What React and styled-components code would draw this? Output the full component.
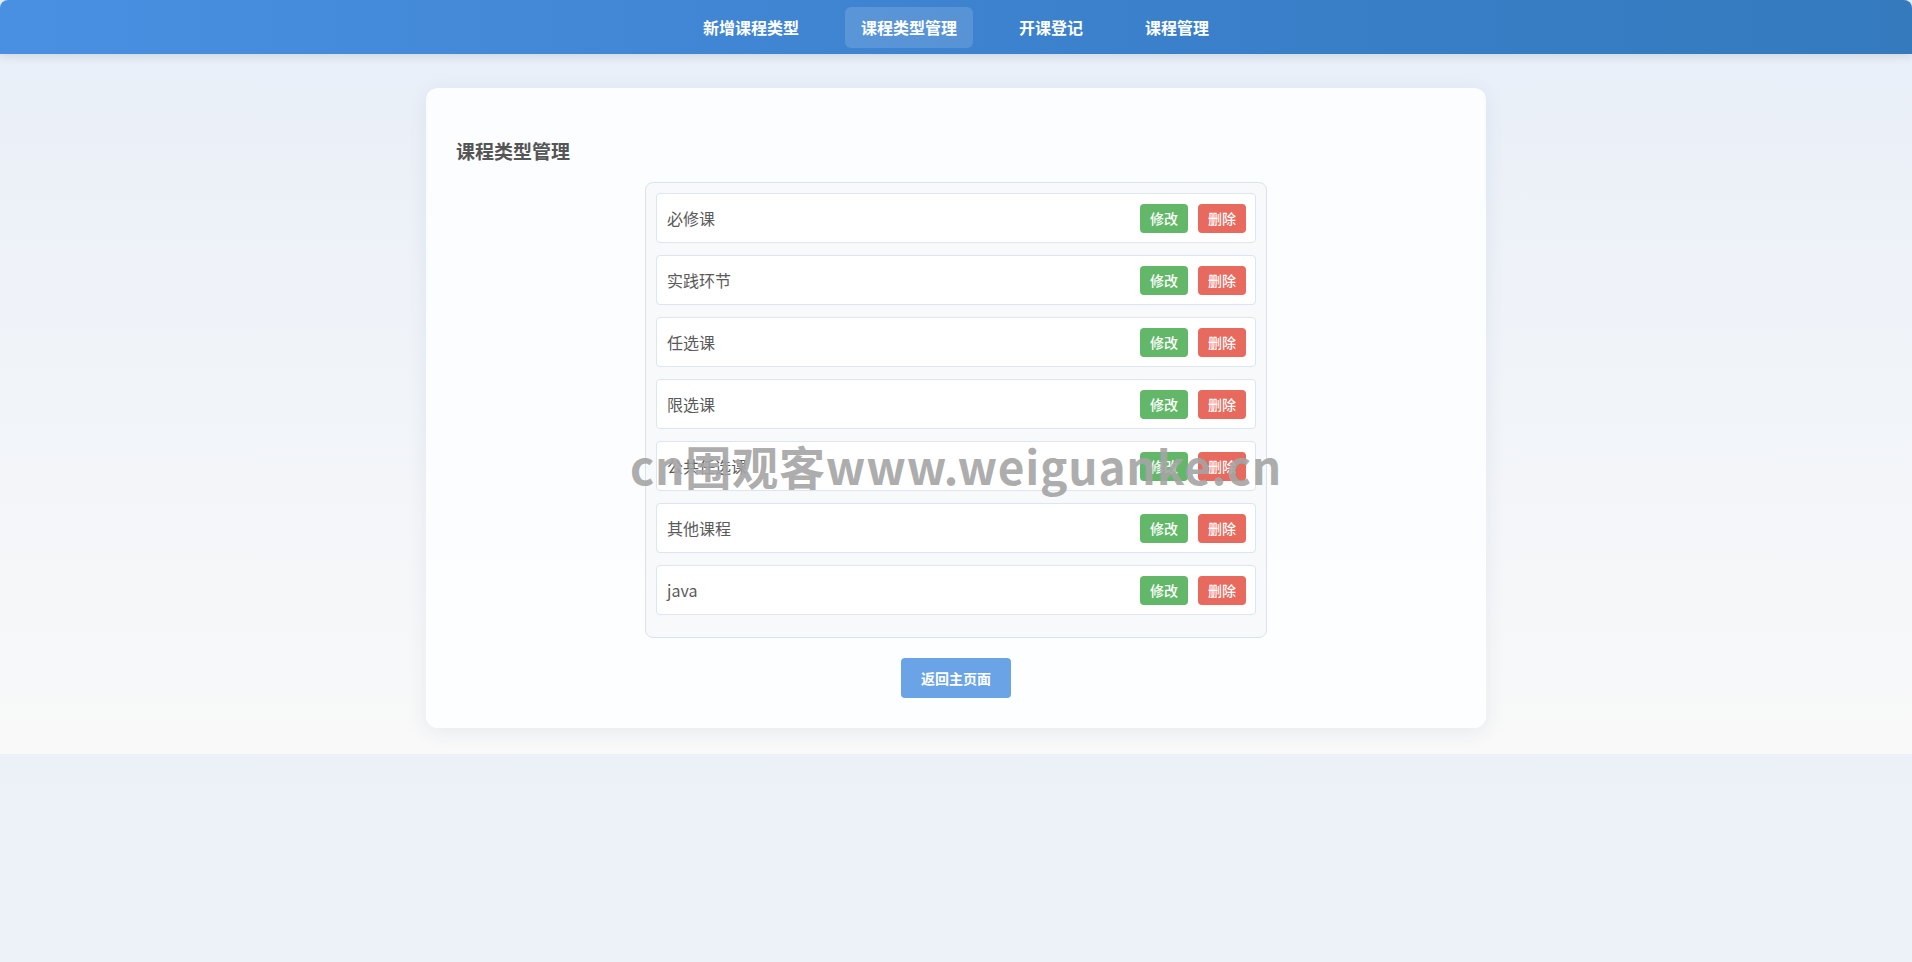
import styled, { createGlobalStyle } from "styled-components";

const GlobalStyle = createGlobalStyle`
  * {
    box-sizing: border-box;
  }
  html, body {
    margin: 0;
    padding: 0;
  }
  body {
    min-height: 100vh;
    background: linear-gradient(180deg, #e9eff8 0%, #edf1f8 100%);
    font-family: "Noto Sans CJK SC", "Noto Sans", "Liberation Sans", sans-serif;
    color: #555;
  }
`;

const navItems = ["新增课程类型", "课程类型管理", "开课登记", "课程管理"];

const courseTypes = [
  "必修课",
  "实践环节",
  "任选课",
  "限选课",
  "公共任选课",
  "其他课程",
  "java",
];

export default function App() {
  return (
    <Page>
      <GlobalStyle />
      <Header>
        <Nav>
          {navItems.map((item) => (
            <NavItem key={item} $active={item === "课程类型管理"}>
              {item}
            </NavItem>
          ))}
        </Nav>
      </Header>
      <Main>
        <Card>
          <Title>课程类型管理</Title>
          <TypeList>
            {courseTypes.map((name) => (
              <TypeRow key={name}>
                <TypeName>{name}</TypeName>
                <Actions>
                  <SmallButton $variant="edit">修改</SmallButton>
                  <SmallButton $variant="delete">删除</SmallButton>
                </Actions>
              </TypeRow>
            ))}
          </TypeList>
          <Footer>
            <BackButton>返回主页面</BackButton>
          </Footer>
        </Card>
      </Main>
      <Watermark>cn围观客www.weiguanke.cn</Watermark>
    </Page>
  );
}

const Page = styled.div`
  position: relative;
`;

const Header = styled.header`
  height: 54px;
  background: linear-gradient(90deg, #4a90e2 0%, #3a80cb 60%, #347abd 100%);
  border-radius: 8px 8px 0 0;
  box-shadow: 0 2px 10px rgba(0, 0, 0, 0.12);
  display: flex;
  align-items: center;
  justify-content: center;
  position: relative;
  z-index: 1;
`;

const Nav = styled.nav`
  display: flex;
  gap: 30px;
`;

const NavItem = styled.a`
  height: 41px;
  padding: 0 16px;
  display: flex;
  align-items: center;
  border-radius: 6px;
  color: #fff;
  font-size: 16px;
  font-weight: 700;
  cursor: pointer;
  background: ${(p) => (p.$active ? "rgba(255, 255, 255, 0.14)" : "transparent")};
`;

const Main = styled.main`
  padding: 34px 0 26px;
  background: linear-gradient(180deg, #e9eff8 0%, #f9f9f9 100%);
`;

const Card = styled.section`
  width: 1060px;
  margin: 0 auto;
  padding: 30px 30px 30px;
  background: rgba(253, 254, 255, 0.9);
  border-radius: 12px;
  box-shadow: 0 4px 20px rgba(40, 70, 120, 0.08);
`;

const Title = styled.h2`
  margin: 20px 0 18px;
  font-size: 19px;
  line-height: 26px;
  font-weight: 700;
  color: #555;
`;

const TypeList = styled.ul`
  list-style: none;
  width: 622px;
  margin: 0 auto;
  padding: 10px;
  background: #f7f9fb;
  border: 1px solid #d8e3ee;
  border-radius: 8px;
`;

const TypeRow = styled.li`
  height: 50px;
  margin-bottom: 12px;
  padding: 0 9px 0 10px;
  display: flex;
  align-items: center;
  justify-content: space-between;
  background: #fff;
  border: 1px solid #dbe6f1;
  border-radius: 4px;
`;

const TypeName = styled.span`
  font-size: 16px;
  color: #5a5a5a;
`;

const Actions = styled.div`
  display: flex;
  gap: 10px;
`;

const SmallButton = styled.button`
  height: 29px;
  padding: 0 10px;
  border: none;
  border-radius: 4px;
  color: #fff;
  font-family: inherit;
  font-size: 14px;
  font-weight: 500;
  cursor: pointer;
  background: ${(p) => (p.$variant === "delete" ? "#e8695d" : "#62b868")};
`;

const Footer = styled.div`
  display: flex;
  justify-content: center;
  margin-top: 20px;
`;

const BackButton = styled.button`
  height: 40px;
  padding: 0 20px;
  border: none;
  border-radius: 4px;
  background: #6aa4e6;
  color: #fff;
  font-family: inherit;
  font-size: 14px;
  font-weight: 700;
  cursor: pointer;
`;

const Watermark = styled.div`
  position: absolute;
  left: 50%;
  top: 465px;
  transform: translate(-50%, -50%);
  white-space: nowrap;
  font-family: "Noto Sans CJK SC", "Noto Sans", sans-serif;
  font-size: 46px;
  font-weight: 700;
  letter-spacing: 0.8px;
  line-height: 1;
  color: rgba(165, 165, 165, 0.92);
  pointer-events: none;
  z-index: 2;
`;
